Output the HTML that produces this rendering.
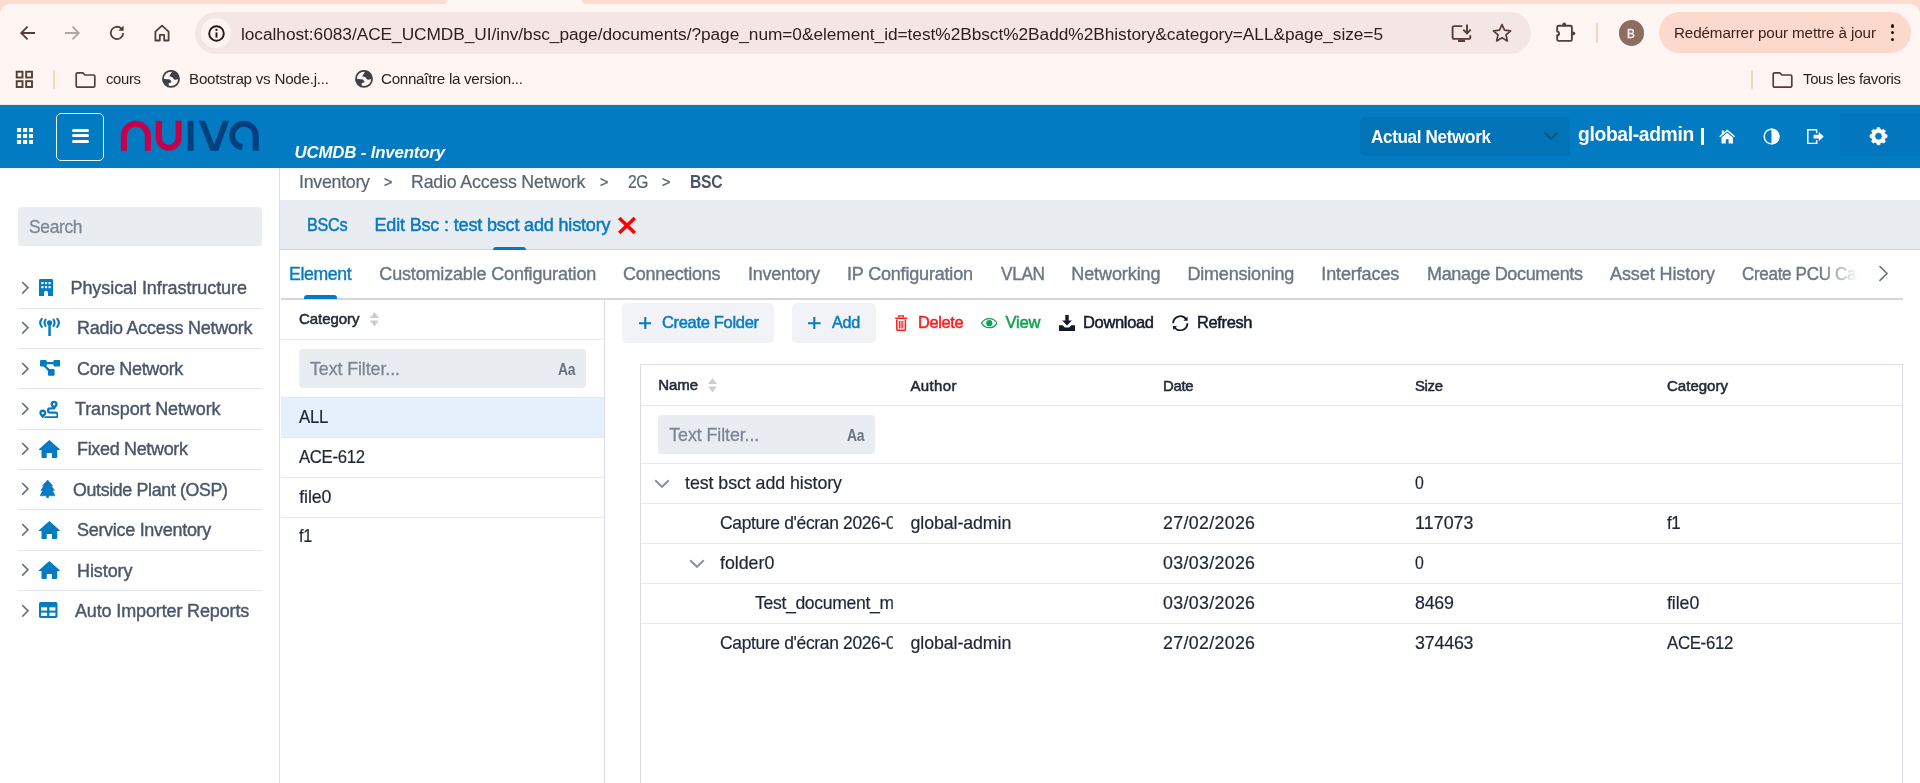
<!DOCTYPE html>
<html lang="en"><head><meta charset="utf-8"><title>UCMDB - Inventory</title>
<style>
html,body{margin:0;padding:0;}
body{width:1920px;height:783px;overflow:hidden;position:relative;background:#fff;font-family:"Liberation Sans", sans-serif;}
#r{position:absolute;left:0;top:0;width:1920px;height:783px;overflow:hidden;will-change:transform;}
#r div,#r span,#r svg{position:absolute;display:block;box-sizing:border-box;}
#r span{white-space:pre;}
</style></head><body><div id="r">
<div style="left:0px;top:0px;width:1920px;height:105px;background:#fff5f2;"></div>
<div style="left:0px;top:0px;width:446.5px;height:4px;background:#fddbd0;border-bottom-right-radius:5px;"></div>
<div style="left:581.5px;top:0px;width:1338.5px;height:4px;background:#fddbd0;border-bottom-left-radius:5px;"></div>
<div style="left:0px;top:3.8px;width:12px;height:12px;background:#fddbd0;"></div>
<div style="left:0px;top:3.8px;width:24px;height:24px;background:#fff5f2;border-top-left-radius:10px;"></div>
<div style="left:1908px;top:3.8px;width:12px;height:12px;background:#fddbd0;"></div>
<div style="left:1896px;top:3.8px;width:24px;height:24px;background:#fff5f2;border-top-right-radius:10px;"></div>
<div style="left:0px;top:104px;width:1920px;height:1px;background:#fbe4dc;"></div>
<svg style="left:18px;top:22.5px;" width="20" height="20" viewBox="0 0 20 20"><path d="M17 10H3.2M9.6 3.6 3.2 10l6.4 6.4" fill="none" stroke="#563d37" stroke-width="1.8"/></svg>
<svg style="left:62px;top:22.5px;" width="20" height="20" viewBox="0 0 20 20"><path d="M3 10h13.8M10.4 3.6 16.8 10l-6.4 6.4" fill="none" stroke="#b3a6a2" stroke-width="1.8"/></svg>
<svg style="left:107.3px;top:22.6px;" width="20" height="20" viewBox="0 0 20 20"><path d="M16.2 10a6.2 6.2 0 1 1-1.9-4.5" fill="none" stroke="#563d37" stroke-width="1.8"/><path d="M16.6 2.6v5.2h-5.2z" fill="#563d37"/></svg>
<svg style="left:152.3px;top:22.5px;" width="20" height="20" viewBox="0 0 20 20"><path d="M3.4 8.600 10 2.600 16.600 8.600v8.900h-4.400v-5.700H7.800v5.700H3.400z" fill="none" stroke="#563d37" stroke-width="1.8" stroke-linejoin="round"/></svg>
<div style="left:195px;top:12px;width:1336px;height:42px;background:#f3e6e5;border-radius:21px;"></div>
<div style="left:201.3px;top:18.3px;width:29.4px;height:29.4px;background:#fdf3f0;border-radius:50%;"></div>
<svg style="left:206.5px;top:23.5px;" width="19" height="19" viewBox="0 0 19 19"><circle cx="9.5" cy="9.5" r="7.300" fill="none" stroke="#231a19" stroke-width="1.900"/><rect x="8.550" y="8.400" width="1.900" height="5.200" fill="#231a19"/><circle cx="9.5" cy="5.900" r="1.150" fill="#231a19"/></svg>
<span style="left:241px;top:22px;line-height:24px;font-size:17.3px;font-weight:400;color:#2e201e;letter-spacing:-0.04px;">localhost:6083/ACE_UCMDB_UI/inv/bsc_page/documents/?page_num=0&amp;element_id=test%2Bbsct%2Badd%2Bhistory&amp;category=ALL&amp;page_size=5</span>
<svg style="left:1450px;top:22px;" width="24" height="22" viewBox="0 0 24 22"><path d="M12.300 4.100H4.200a1.600 1.600 0 0 0-1.600 1.600V15.300a1.600 1.600 0 0 0 1.600 1.600H18.700a1.600 1.600 0 0 0 1.600-1.600V13.200" fill="none" stroke="#563d37" stroke-width="1.900"/><rect x="8" y="17.500" width="7" height="2.500" fill="#563d37"/><path d="M17 2.400v8.600M13.300 7.600l3.700 3.700 3.700-3.700" fill="none" stroke="#563d37" stroke-width="1.900"/></svg>
<svg style="left:1491px;top:22px;" width="22" height="22" viewBox="0 0 22 22"><path d="M11 2.6l2.5 5.6 6.1.6-4.6 4.1 1.3 6L11 15.8 5.7 18.9l1.3-6L2.4 8.8l6.1-.6z" fill="none" stroke="#563d37" stroke-width="1.7" stroke-linejoin="round"/></svg>
<svg style="left:1554px;top:21px;" width="24" height="24" viewBox="0 0 24 24"><path d="M4.700 4.800H16.400a1.500 1.500 0 0 1 1.500 1.500V18.400a1.500 1.500 0 0 1-1.500 1.500H4.700a1.500 1.500 0 0 1-1.500-1.500V14.300a1.900 1.900 0 0 0 0-3.800V6.300a1.500 1.500 0 0 1 1.500-1.500z" fill="none" stroke="#563d37" stroke-width="1.900" stroke-linejoin="round"/><circle cx="10.200" cy="3.500" r="1.900" fill="#563d37"/><circle cx="19.300" cy="12.300" r="1.900" fill="#563d37"/></svg>
<div style="left:1596px;top:23px;width:2px;height:20px;background:#fbd0c4;border-radius:1px;"></div>
<div style="left:1618.5px;top:20px;width:25.5px;height:25.5px;background:#8c6d62;border-radius:50%;"></div>
<span style="left:1627.3px;top:22px;line-height:24px;font-size:12.8px;font-weight:400;color:#f6ebe7;transform:scaleX(0.9126);transform-origin:0 50%;-webkit-text-stroke:0.5px #f6ebe7;">B</span>
<div style="left:1659px;top:11.5px;width:252px;height:41.5px;background:#fdd8cd;border-radius:21px;"></div>
<span style="left:1674px;top:21px;line-height:24px;font-size:15.2px;font-weight:400;color:#3a1f1a;letter-spacing:-0.112px;">Redémarrer pour mettre à jour</span>
<div style="left:1890.6px;top:23.95px;width:3.7px;height:3.7px;background:#32100c;border-radius:50%;"></div>
<div style="left:1890.6px;top:30.75px;width:3.7px;height:3.7px;background:#32100c;border-radius:50%;"></div>
<div style="left:1890.6px;top:37.55px;width:3.7px;height:3.7px;background:#32100c;border-radius:50%;"></div>
<svg style="left:15.3px;top:70px;" width="19" height="19" viewBox="0 0 19 19"><rect x="1.7" y="1.7" width="5.800" height="5.800" fill="none" stroke="#563d37" stroke-width="1.900"/><rect x="1.7" y="11.2" width="5.800" height="5.800" fill="none" stroke="#563d37" stroke-width="1.900"/><rect x="11.2" y="1.7" width="5.800" height="5.800" fill="none" stroke="#563d37" stroke-width="1.900"/><rect x="11.2" y="11.2" width="5.800" height="5.800" fill="none" stroke="#563d37" stroke-width="1.900"/></svg>
<div style="left:52.5px;top:69.5px;width:2px;height:19px;background:#fbd0c4;border-radius:1px;"></div>
<svg style="left:75px;top:70.5px;" width="21" height="18" viewBox="0 0 21 18"><path d="M1.2 3.2a1.4 1.4 0 0 1 1.4-1.4h5.2l2 2.2h8.6a1.4 1.4 0 0 1 1.4 1.4v9.4a1.4 1.4 0 0 1-1.4 1.4H2.6a1.4 1.4 0 0 1-1.4-1.4z" fill="none" stroke="#563d37" stroke-width="1.7" stroke-linejoin="round"/></svg>
<span style="left:105.5px;top:67px;line-height:24px;font-size:15.2px;font-weight:400;color:#2d2322;letter-spacing:-0.35px;transform:scaleX(0.9793);transform-origin:0 50%;">cours</span>
<svg style="left:162px;top:70px;" width="18" height="18" viewBox="0 0 18 18"><defs><clipPath id="gc1"><circle cx="9" cy="8.900" r="8.300"/></clipPath></defs><g clip-path="url(#gc1)" fill="#3e4144"><path d="M11.400 0C9.600 2.600 8 4.600 7.200 6.200 8.600 6.500 10 6.900 10.800 7.600 11.300 8.700 11.900 9.600 13.100 9.700 15 9.800 16.600 9 18.500 7.400V-1z"/><path d="M-1 9.100C3 8.900 6 9.200 7.900 9.600 8.700 10.400 9.400 11.400 9.500 12.300 8.600 12.800 7.500 13 6.800 13.200 6.600 14.300 6.600 15.600 6.900 18.500H-1z"/></g><circle cx="9" cy="8.900" r="8.050" fill="none" stroke="#3e4144" stroke-width="1.800"/></svg>
<span style="left:189px;top:67px;line-height:24px;font-size:15.2px;font-weight:400;color:#2d2322;letter-spacing:-0.248px;">Bootstrap vs Node.j...</span>
<svg style="left:355px;top:70px;" width="18" height="18" viewBox="0 0 18 18"><defs><clipPath id="gc2"><circle cx="9" cy="8.900" r="8.300"/></clipPath></defs><g clip-path="url(#gc2)" fill="#3e4144"><path d="M11.400 0C9.600 2.600 8 4.600 7.200 6.200 8.600 6.500 10 6.900 10.800 7.600 11.300 8.700 11.900 9.600 13.100 9.700 15 9.800 16.600 9 18.500 7.400V-1z"/><path d="M-1 9.100C3 8.900 6 9.200 7.900 9.600 8.700 10.400 9.400 11.400 9.500 12.300 8.600 12.800 7.500 13 6.800 13.200 6.600 14.300 6.600 15.600 6.900 18.500H-1z"/></g><circle cx="9" cy="8.900" r="8.050" fill="none" stroke="#3e4144" stroke-width="1.800"/></svg>
<span style="left:381px;top:67px;line-height:24px;font-size:15.2px;font-weight:400;color:#2d2322;letter-spacing:-0.299px;">Connaître la version...</span>
<div style="left:1750.5px;top:69.5px;width:2px;height:19px;background:#fbd0c4;border-radius:1px;"></div>
<svg style="left:1772px;top:70.5px;" width="21" height="18" viewBox="0 0 21 18"><path d="M1.2 3.2a1.4 1.4 0 0 1 1.4-1.4h5.2l2 2.2h8.6a1.4 1.4 0 0 1 1.4 1.4v9.4a1.4 1.4 0 0 1-1.4 1.4H2.6a1.4 1.4 0 0 1-1.4-1.4z" fill="none" stroke="#563d37" stroke-width="1.7" stroke-linejoin="round"/></svg>
<span style="left:1803px;top:67px;line-height:24px;font-size:15.2px;font-weight:400;color:#2d2322;letter-spacing:-0.35px;transform:scaleX(0.9857);transform-origin:0 50%;">Tous les favoris</span>
<div style="left:0px;top:105px;width:1920px;height:62.7px;background:#027bc3;"></div>
<svg style="left:16.9px;top:128.1px;" width="16.2" height="16.2" viewBox="0 0 16.200 16.200"><rect x="0" y="0" width="4.100" height="4.100" fill="#fff"/><rect x="0" y="6" width="4.100" height="4.100" fill="#fff"/><rect x="0" y="12" width="4.100" height="4.100" fill="#fff"/><rect x="6.05" y="0" width="4.100" height="4.100" fill="#fff"/><rect x="6.05" y="6" width="4.100" height="4.100" fill="#fff"/><rect x="6.05" y="12" width="4.100" height="4.100" fill="#fff"/><rect x="12.1" y="0" width="4.100" height="4.100" fill="#fff"/><rect x="12.1" y="6" width="4.100" height="4.100" fill="#fff"/><rect x="12.1" y="12" width="4.100" height="4.100" fill="#fff"/></svg>
<div style="left:56px;top:112.9px;width:48.1px;height:48.1px;background:transparent;border:1.2px solid #eef5fa;border-radius:5px;"></div>
<div style="left:71.7px;top:129.0px;width:17.8px;height:3px;background:#fff;border-radius:1.5px;"></div>
<div style="left:71.7px;top:134.4px;width:17.8px;height:3px;background:#fff;border-radius:1.5px;"></div>
<div style="left:71.7px;top:140.0px;width:17.8px;height:3px;background:#fff;border-radius:1.5px;"></div>
<svg style="left:116px;top:116px;" width="148" height="40" viewBox="116 116 148 40"><g fill="none" stroke-width="6.1"><path d="M123.9 150.8V135.8a12 12 0 0 1 24 0V150.8" stroke="#c5004b"/><path d="M158.8 120.8V137.8a9.9 9.9 0 0 0 19.8 0V120.8" stroke="#c5004b"/><path d="M190.6 120.8V150.8" stroke="#00407f" stroke-width="5.9"/><path d="M198.750 120.800H205.050L214.270 144.600 222.900 120.800H229.200L218.300 150.800H210.400z" fill="#00407f" stroke="none"/><path d="M255.7 150.8V135.6a11.75 11.75 0 1 0-13.2 11.66" stroke="#00407f" stroke-width="6"/></g></svg>
<span style="left:294.5px;top:141px;line-height:24px;font-size:16.8px;font-weight:700;color:#fff;font-style:italic;letter-spacing:-0.15px;">UCMDB - Inventory</span>
<div style="left:1360px;top:117px;width:210px;height:38.5px;background:#0273b7;border-radius:5px;"></div>
<span style="left:1371px;top:125px;line-height:24px;font-size:17.6px;font-weight:700;color:#fff;letter-spacing:-0.35px;transform:scaleX(0.9714);transform-origin:0 50%;">Actual Network</span>
<svg style="left:1543px;top:131px;" width="16" height="10" viewBox="0 0 16 10"><path d="M1.6 1.6 8 8l6.400-6.400" fill="none" stroke="#0a4f82" stroke-width="1.9"/></svg>
<span style="left:1578px;top:122px;line-height:24px;font-size:19.6px;font-weight:700;color:#fff;letter-spacing:-0.35px;transform:scaleX(0.9841);transform-origin:0 50%;">global-admin</span>
<div style="left:1701.2px;top:127.6px;width:2.4px;height:17.2px;background:#fff;"></div>
<svg style="left:1718.9px;top:128.6px;" width="16.4" height="15" viewBox="0 0 16.4 15"><g transform="translate(16.4 0) scale(-1 1)"><path d="M8.200.500.200 7.200l.9 1L8.200 2.400l7.100 5.800.9-1-2.600-2.200V1.400h-1.900v2z" fill="#fff"/><path d="M8.200 3.700 2.500 8.400v6.200h4.300v-4.300h2.800v4.300h4.300V8.400z" fill="#fff"/></g></svg>
<svg style="left:1762.6px;top:127.5px;" width="17" height="17" viewBox="0 0 17 17"><circle cx="8.5" cy="8.500" r="7.300" fill="none" stroke="#fff" stroke-width="1.500"/><path d="M8.500.500a8 8 0 0 1 0 16z" fill="#fff"/></svg>
<svg style="left:1806.5px;top:128.6px;" width="17.4" height="15.2" viewBox="0 0 17.400 15.200"><path d="M9.700.700H.800v13.800h8.900v-3.400" fill="none" stroke="#fff" stroke-width="1.500"/><path d="M9.700.700v3.400" fill="none" stroke="#fff" stroke-width="1.500"/><path d="M6.600 5.700h5.200V2.900l4.900 4.700-4.900 4.700V9.500H6.600z" fill="#fff"/></svg>
<div style="left:1839.5px;top:113px;width:80.5px;height:42.5px;background:#0277bd;"></div>
<svg style="left:1868px;top:125.5px;" width="21" height="21" viewBox="0 0 21 21"><path d="M18.99 8.85L18.99 11.55L17.32 11.78L16.44 13.90L17.46 15.25L15.55 17.16L14.20 16.14L12.08 17.02L11.85 18.69L9.15 18.69L8.92 17.02L6.80 16.14L5.45 17.16L3.54 15.25L4.56 13.90L3.68 11.78L2.01 11.55L2.01 8.85L3.68 8.62L4.56 6.50L3.54 5.15L5.45 3.24L6.80 4.26L8.92 3.38L9.15 1.71L11.85 1.71L12.08 3.38L14.20 4.26L15.55 3.24L17.46 5.15L16.44 6.50L17.32 8.62ZM14.30 10.20a3.8 3.8 0 1 0 -7.6 0a3.8 3.8 0 1 0 7.6 0Z" fill="#fff" fill-rule="evenodd" stroke="#fff" stroke-width="0.800" stroke-linejoin="round"/></svg>
<div style="left:279px;top:167.7px;width:1px;height:616px;background:#dadfe7;"></div>
<div style="left:18px;top:207px;width:244px;height:39px;background:#e9ecf1;border-radius:4px;"></div>
<span style="left:29px;top:215px;line-height:24px;font-size:17.8px;font-weight:400;color:#7d8794;letter-spacing:-0.35px;transform:scaleX(0.98);transform-origin:0 50%;-webkit-text-stroke:0.3px #7d8794;">Search</span>
<svg style="left:21.4px;top:280.5px;" width="9" height="13.6" viewBox="0 0 9 13.600"><path d="M1.200 1 7 6.800 1.200 12.600" fill="none" stroke="#6b7280" stroke-width="1.700"/></svg>
<svg style="left:39.2px;top:278.5px;" width="14" height="17.2" viewBox="0 0 14 17.200"><path d="M1.300 0h11.400A1.300 1.300 0 0 1 14 1.300V17.200H9v-3.400a2 2 0 0 0-4 0v3.400H0V1.300A1.300 1.300 0 0 1 1.300 0z" fill="#027bc3"/><rect x="2.3" y="3" width="2.200" height="2.200" rx=".4" fill="#fff"/><rect x="2.3" y="7" width="2.200" height="2.200" rx=".4" fill="#fff"/><rect x="5.9" y="3" width="2.200" height="2.200" rx=".4" fill="#fff"/><rect x="5.9" y="7" width="2.200" height="2.200" rx=".4" fill="#fff"/><rect x="9.5" y="3" width="2.200" height="2.200" rx=".4" fill="#fff"/><rect x="9.5" y="7" width="2.200" height="2.200" rx=".4" fill="#fff"/></svg>
<span style="left:70.5px;top:276px;line-height:24px;font-size:18px;font-weight:400;color:#4b566a;letter-spacing:-0.072px;-webkit-text-stroke:0.4px #4b566a;">Physical Infrastructure</span>
<div style="left:18px;top:308px;width:244px;height:1px;background:#e2e5ea;"></div>
<svg style="left:21.4px;top:320.5px;" width="9" height="13.6" viewBox="0 0 9 13.600"><path d="M1.200 1 7 6.800 1.200 12.600" fill="none" stroke="#6b7280" stroke-width="1.700"/></svg>
<svg style="left:39px;top:317.90000000000003px;" width="21.1" height="18.2" viewBox="0 0 21.100 18.200"><g fill="none" stroke="#027bc3" stroke-width="2.100" stroke-linecap="round"><path d="M10.550 5v12.200" stroke-width="2.500" stroke-linecap="butt"/><path d="M6.500 1.700Q4.500 4.800 6.500 7.900M14.600 1.700Q16.600 4.800 14.600 7.900M2.800 .9Q-.4 4.800 2.800 8.900M18.300 .9Q21.500 4.800 18.300 8.900"/></g><circle cx="10.550" cy="4.800" r="2.600" fill="#027bc3"/><rect x="9.300" y="16.600" width="2.500" height="1.600" rx=".8" fill="#027bc3"/></svg>
<span style="left:77px;top:316px;line-height:24px;font-size:18px;font-weight:400;color:#4b566a;letter-spacing:-0.241px;-webkit-text-stroke:0.4px #4b566a;">Radio Access Network</span>
<div style="left:18px;top:348px;width:244px;height:1px;background:#e2e5ea;"></div>
<svg style="left:21.4px;top:361.59999999999997px;" width="9" height="13.6" viewBox="0 0 9 13.600"><path d="M1.200 1 7 6.800 1.200 12.600" fill="none" stroke="#6b7280" stroke-width="1.700"/></svg>
<svg style="left:39.6px;top:360.29999999999995px;" width="20.4" height="15.7" viewBox="0 0 20.400 15.700"><rect x="0" y="0" width="6.700" height="6.500" rx="1.200" fill="#027bc3"/><rect x="13.500" y="0" width="6.900" height="6.500" rx="1.200" fill="#027bc3"/><rect x="7.900" y="9.100" width="6.700" height="6.600" rx="1.200" fill="#027bc3"/><path d="M6 3.200h8.500M4.300 5.600 9.700 10.900" stroke="#027bc3" stroke-width="2.200" fill="none"/></svg>
<span style="left:77px;top:357px;line-height:24px;font-size:18px;font-weight:400;color:#4b566a;letter-spacing:-0.339px;-webkit-text-stroke:0.4px #4b566a;">Core Network</span>
<div style="left:18px;top:388px;width:244px;height:1px;background:#e2e5ea;"></div>
<svg style="left:21.4px;top:401.7px;" width="9" height="13.6" viewBox="0 0 9 13.600"><path d="M1.200 1 7 6.800 1.200 12.600" fill="none" stroke="#6b7280" stroke-width="1.700"/></svg>
<svg style="left:39px;top:399.6px;" width="19.2" height="18.6" viewBox="0 0 19.200 18.600"><path d="M3.800 18.500C2.600 16.900.300 15 .300 13.100a3.500 3.500 0 0 1 7 0c0 1.900-2.300 3.800-3.500 5.400zM3.800 11.900a1.200 1.200 0 1 0 0 2.400 1.200 1.200 0 0 0 0-2.400z" fill="#027bc3" fill-rule="evenodd"/><path d="M15.300 9.500C14 8 11.500 6.100 11.500 4.200a3.550 3.550 0 0 1 7.100 0c0 1.900-2.100 3.800-3.300 5.300zM15.050 3a1.200 1.200 0 1 0 0 2.400 1.200 1.200 0 0 0 0-2.400z" fill="#027bc3" fill-rule="evenodd"/><path d="M15.200 8.400H11.200a2.150 2.150 0 0 0 0 4.300H16.400a2.350 2.350 0 0 1 0 4.700H6.400" fill="none" stroke="#027bc3" stroke-width="2.200" stroke-linecap="round"/></svg>
<span style="left:75px;top:397px;line-height:24px;font-size:18px;font-weight:400;color:#4b566a;letter-spacing:-0.117px;-webkit-text-stroke:0.4px #4b566a;">Transport Network</span>
<div style="left:18px;top:429px;width:244px;height:1px;background:#e2e5ea;"></div>
<svg style="left:21.4px;top:441.8px;" width="9" height="13.6" viewBox="0 0 9 13.600"><path d="M1.200 1 7 6.800 1.200 12.600" fill="none" stroke="#6b7280" stroke-width="1.700"/></svg>
<svg style="left:39.4px;top:439.8px;" width="20.7" height="17.9" viewBox="0 0 20.700 17.900"><path d="M10.350 0 20.500 9.100a.55 .55 0 0 1-.4 1H18.200v7a.8 .8 0 0 1-.8 .8H12.900V13.100H7.700v4.800H3.300a.8 .8 0 0 1-.8-.8v-7H.6a.55 .55 0 0 1-.4-1z" fill="#027bc3"/></svg>
<span style="left:77px;top:437px;line-height:24px;font-size:18px;font-weight:400;color:#4b566a;letter-spacing:-0.336px;-webkit-text-stroke:0.4px #4b566a;">Fixed Network</span>
<div style="left:18px;top:469px;width:244px;height:1px;background:#e2e5ea;"></div>
<svg style="left:21.4px;top:482.2px;" width="9" height="13.6" viewBox="0 0 9 13.600"><path d="M1.200 1 7 6.800 1.200 12.600" fill="none" stroke="#6b7280" stroke-width="1.700"/></svg>
<svg style="left:39.9px;top:480.2px;" width="15.2" height="17.8" viewBox="0 0 15.200 17.800"><path d="M7.600 0 12.800 5.800H11.300L14.500 10.400H12.500L15.200 15.800H8.700v2H6.500v-2H0L2.700 10.400H.7L3.900 5.800H2.400z" fill="#027bc3" stroke="#027bc3" stroke-width=".5" stroke-linejoin="round"/></svg>
<span style="left:72.5px;top:478px;line-height:24px;font-size:18px;font-weight:400;color:#4b566a;letter-spacing:-0.35px;transform:scaleX(0.9887);transform-origin:0 50%;-webkit-text-stroke:0.4px #4b566a;">Outside Plant (OSP)</span>
<div style="left:18px;top:509px;width:244px;height:1px;background:#e2e5ea;"></div>
<svg style="left:21.4px;top:522.7px;" width="9" height="13.6" viewBox="0 0 9 13.600"><path d="M1.200 1 7 6.800 1.200 12.600" fill="none" stroke="#6b7280" stroke-width="1.700"/></svg>
<svg style="left:39.4px;top:520.7px;" width="20.7" height="17.9" viewBox="0 0 20.700 17.900"><path d="M10.350 0 20.500 9.100a.55 .55 0 0 1-.4 1H18.200v7a.8 .8 0 0 1-.8 .8H12.900V13.100H7.700v4.800H3.300a.8 .8 0 0 1-.8-.8v-7H.6a.55 .55 0 0 1-.4-1z" fill="#027bc3"/></svg>
<span style="left:77px;top:518px;line-height:24px;font-size:18px;font-weight:400;color:#4b566a;letter-spacing:-0.298px;-webkit-text-stroke:0.4px #4b566a;">Service Inventory</span>
<div style="left:18px;top:550px;width:244px;height:1px;background:#e2e5ea;"></div>
<svg style="left:21.4px;top:563.4000000000001px;" width="9" height="13.6" viewBox="0 0 9 13.600"><path d="M1.200 1 7 6.800 1.200 12.600" fill="none" stroke="#6b7280" stroke-width="1.700"/></svg>
<svg style="left:39.4px;top:561.4000000000001px;" width="20.7" height="17.9" viewBox="0 0 20.700 17.900"><path d="M10.350 0 20.500 9.100a.55 .55 0 0 1-.4 1H18.200v7a.8 .8 0 0 1-.8 .8H12.900V13.100H7.700v4.800H3.300a.8 .8 0 0 1-.8-.8v-7H.6a.55 .55 0 0 1-.4-1z" fill="#027bc3"/></svg>
<span style="left:77px;top:559px;line-height:24px;font-size:18px;font-weight:400;color:#4b566a;letter-spacing:-0.086px;-webkit-text-stroke:0.4px #4b566a;">History</span>
<div style="left:18px;top:590px;width:244px;height:1px;background:#e2e5ea;"></div>
<svg style="left:21.4px;top:603.7px;" width="9" height="13.6" viewBox="0 0 9 13.600"><path d="M1.200 1 7 6.800 1.200 12.600" fill="none" stroke="#6b7280" stroke-width="1.700"/></svg>
<svg style="left:39.2px;top:602.2px;" width="18.5" height="16" viewBox="0 0 18.500 16"><rect x="0" y="0" width="18.500" height="16" rx="1.800" fill="#027bc3"/><rect x="2.1" y="5.3" width="6" height="3.300" fill="#fff"/><rect x="2.1" y="10.6" width="6" height="3.300" fill="#fff"/><rect x="10.4" y="5.3" width="6" height="3.300" fill="#fff"/><rect x="10.4" y="10.6" width="6" height="3.300" fill="#fff"/></svg>
<span style="left:75px;top:599px;line-height:24px;font-size:18px;font-weight:400;color:#4b566a;letter-spacing:-0.139px;-webkit-text-stroke:0.4px #4b566a;">Auto Importer Reports</span>
<span style="left:299px;top:170px;line-height:24px;font-size:17.8px;font-weight:400;color:#5a6470;letter-spacing:-0.268px;-webkit-text-stroke:0.2px #5a6470;">Inventory</span>
<span style="left:383.5px;top:170px;line-height:24px;font-size:15.5px;font-weight:400;color:#5a6470;transform:scaleX(0.9379);transform-origin:0 50%;-webkit-text-stroke:0.4px #5a6470;">&gt;</span>
<span style="left:411px;top:170px;line-height:24px;font-size:17.8px;font-weight:400;color:#5a6470;letter-spacing:-0.178px;-webkit-text-stroke:0.2px #5a6470;">Radio Access Network</span>
<span style="left:599.5px;top:170px;line-height:24px;font-size:15.5px;font-weight:400;color:#5a6470;transform:scaleX(0.9379);transform-origin:0 50%;-webkit-text-stroke:0.4px #5a6470;">&gt;</span>
<span style="left:627.5px;top:170px;line-height:24px;font-size:17.8px;font-weight:400;color:#5a6470;letter-spacing:-0.35px;transform:scaleX(0.8767);transform-origin:0 50%;-webkit-text-stroke:0.2px #5a6470;">2G</span>
<span style="left:661.5px;top:170px;line-height:24px;font-size:15.5px;font-weight:400;color:#5a6470;transform:scaleX(0.9379);transform-origin:0 50%;-webkit-text-stroke:0.4px #5a6470;">&gt;</span>
<span style="left:689.5px;top:170px;line-height:24px;font-size:17.6px;font-weight:700;color:#4a5568;letter-spacing:-0.35px;transform:scaleX(0.8915);transform-origin:0 50%;">BSC</span>
<div style="left:280px;top:200px;width:1640px;height:49.5px;background:#e9ecf1;"></div>
<div style="left:280px;top:249px;width:1640px;height:1px;background:#cdd3dc;"></div>
<span style="left:307px;top:213px;line-height:24px;font-size:18px;font-weight:400;color:#0a7ac0;letter-spacing:-0.35px;transform:scaleX(0.9007);transform-origin:0 50%;-webkit-text-stroke:0.5px #0a7ac0;">BSCs</span>
<span style="left:374.5px;top:213px;line-height:24px;font-size:18px;font-weight:400;color:#0a7ac0;letter-spacing:-0.165px;-webkit-text-stroke:0.5px #0a7ac0;">Edit Bsc : test bsct add history</span>
<svg style="left:617px;top:215.5px;" width="20" height="19" viewBox="0 0 20 19"><path d="M2.200 2 17.800 17M17.800 2 2.200 17" stroke="#f00" stroke-width="3.500" fill="none"/></svg>
<div style="left:492.5px;top:246.6px;width:33px;height:3.4px;background:#027bc3;border-radius:3px 3px 0 0;"></div>
<span style="left:289.3px;top:262px;line-height:24px;font-size:18px;font-weight:400;color:#0a7ac0;letter-spacing:-0.35px;transform:scaleX(0.9805);transform-origin:0 50%;-webkit-text-stroke:0.4px #0a7ac0;">Element</span>
<span style="left:379.3px;top:262px;line-height:24px;font-size:18px;font-weight:400;color:#6b7785;letter-spacing:-0.165px;-webkit-text-stroke:0.4px #6b7785;">Customizable Configuration</span>
<span style="left:623px;top:262px;line-height:24px;font-size:18px;font-weight:400;color:#6b7785;letter-spacing:-0.258px;-webkit-text-stroke:0.4px #6b7785;">Connections</span>
<span style="left:748px;top:262px;line-height:24px;font-size:18px;font-weight:400;color:#6b7785;letter-spacing:-0.256px;-webkit-text-stroke:0.4px #6b7785;">Inventory</span>
<span style="left:847px;top:262px;line-height:24px;font-size:18px;font-weight:400;color:#6b7785;letter-spacing:-0.184px;-webkit-text-stroke:0.4px #6b7785;">IP Configuration</span>
<span style="left:1000.5px;top:262px;line-height:24px;font-size:18px;font-weight:400;color:#6b7785;letter-spacing:-0.35px;transform:scaleX(0.9569);transform-origin:0 50%;-webkit-text-stroke:0.4px #6b7785;">VLAN</span>
<span style="left:1071.3px;top:262px;line-height:24px;font-size:18px;font-weight:400;color:#6b7785;letter-spacing:-0.094px;-webkit-text-stroke:0.4px #6b7785;">Networking</span>
<span style="left:1187.5px;top:262px;line-height:24px;font-size:18px;font-weight:400;color:#6b7785;letter-spacing:-0.206px;-webkit-text-stroke:0.4px #6b7785;">Dimensioning</span>
<span style="left:1321.3px;top:262px;line-height:24px;font-size:18px;font-weight:400;color:#6b7785;letter-spacing:-0.116px;-webkit-text-stroke:0.4px #6b7785;">Interfaces</span>
<span style="left:1427px;top:262px;line-height:24px;font-size:18px;font-weight:400;color:#6b7785;letter-spacing:-0.34px;-webkit-text-stroke:0.4px #6b7785;">Manage Documents</span>
<span style="left:1610px;top:262px;line-height:24px;font-size:18px;font-weight:400;color:#6b7785;letter-spacing:-0.086px;-webkit-text-stroke:0.4px #6b7785;">Asset History</span>
<span style="left:1741.8px;top:262px;line-height:24px;font-size:18px;font-weight:400;color:#6b7785;letter-spacing:-0.35px;transform:scaleX(0.9475);transform-origin:0 50%;-webkit-text-stroke:0.4px #6b7785;">Create PCU Card</span>
<div style="left:1822px;top:255px;width:50px;height:38px;background:linear-gradient(90deg,rgba(255,255,255,0),#fff 72%);"></div>
<div style="left:1858px;top:255px;width:62px;height:38px;background:#fff;"></div>
<svg style="left:1878px;top:264.5px;" width="11" height="17" viewBox="0 0 11 17"><path d="M1.500 1.200 9 8.500 1.500 15.800" fill="none" stroke="#6b7785" stroke-width="1.700"/></svg>
<div style="left:280.5px;top:297.6px;width:1622px;height:2.2px;background:#d3d7dd;"></div>
<div style="left:304.3px;top:295px;width:33.2px;height:3.5px;background:#027bc3;border-radius:3px 3px 0 0;"></div>
<div style="left:604px;top:299.8px;width:1px;height:484px;background:#dadfe7;"></div>
<span style="left:299px;top:307px;line-height:24px;font-size:15px;font-weight:400;color:#1f2937;letter-spacing:-0.054px;-webkit-text-stroke:0.55px #1f2937;">Category</span>
<svg style="left:369.8px;top:312px;" width="9" height="14.5" viewBox="0 0 9 14.500"><path d="M4.500 0 9 6H0z" fill="#c9ced6"/><path d="M0 8.500h9L4.500 14.500z" fill="#c9ced6"/></svg>
<div style="left:281px;top:339px;width:323px;height:1px;background:#e6e9ef;"></div>
<div style="left:299px;top:349px;width:287px;height:38.5px;background:#e9ecf1;border-radius:4px;"></div>
<span style="left:310px;top:357px;line-height:24px;font-size:17.8px;font-weight:400;color:#7d8794;letter-spacing:-0.07px;-webkit-text-stroke:0.3px #7d8794;">Text Filter...</span>
<span style="left:558px;top:358px;line-height:24px;font-size:17px;font-weight:700;color:#6b7280;letter-spacing:-0.35px;transform:scaleX(0.8184);transform-origin:0 50%;">Aa</span>
<div style="left:281px;top:397.3px;width:323px;height:40px;background:#e6f0fd;"></div>
<div style="left:281px;top:397px;width:323px;height:1px;background:#e6e9ef;"></div>
<div style="left:281px;top:437.3px;width:323px;height:1px;background:#e6e9ef;"></div>
<div style="left:281px;top:477.3px;width:323px;height:1px;background:#e6e9ef;"></div>
<div style="left:281px;top:517px;width:323px;height:1px;background:#e6e9ef;"></div>
<span style="left:299px;top:405px;line-height:24px;font-size:17.8px;font-weight:400;color:#1e2637;letter-spacing:-0.35px;transform:scaleX(0.947);transform-origin:0 50%;-webkit-text-stroke:0.2px #1e2637;">ALL</span>
<span style="left:299px;top:445px;line-height:24px;font-size:17.8px;font-weight:400;color:#1e2637;letter-spacing:-0.35px;transform:scaleX(0.9421);transform-origin:0 50%;-webkit-text-stroke:0.2px #1e2637;">ACE-612</span>
<span style="left:299.3px;top:485px;line-height:24px;font-size:17.8px;font-weight:400;color:#1e2637;letter-spacing:-0.156px;-webkit-text-stroke:0.2px #1e2637;">file0</span>
<span style="left:299.3px;top:524px;line-height:24px;font-size:17.8px;font-weight:400;color:#1e2637;letter-spacing:-0.35px;transform:scaleX(0.9107);transform-origin:0 50%;-webkit-text-stroke:0.2px #1e2637;">f1</span>
<div style="left:622px;top:303px;width:151.5px;height:39.5px;background:#f1f3f6;border-radius:5px;"></div>
<div style="left:791.8px;top:303px;width:83.8px;height:39.5px;background:#f1f3f6;border-radius:5px;"></div>
<svg style="left:638.7px;top:316.5px;" width="12.6" height="12.6" viewBox="0 0 12.600 12.600"><path d="M6.300 0v12.600M0 6.300h12.600" stroke="#0a7ac0" stroke-width="2.100" fill="none"/></svg>
<span style="left:661.8px;top:311px;line-height:24px;font-size:16.6px;font-weight:400;color:#0a7ac0;letter-spacing:-0.35px;transform:scaleX(0.9974);transform-origin:0 50%;-webkit-text-stroke:0.5px #0a7ac0;">Create Folder</span>
<svg style="left:808.2px;top:316.5px;" width="12.6" height="12.6" viewBox="0 0 12.600 12.600"><path d="M6.300 0v12.600M0 6.300h12.600" stroke="#0a7ac0" stroke-width="2.100" fill="none"/></svg>
<span style="left:831.8px;top:311px;line-height:24px;font-size:16.6px;font-weight:400;color:#0a7ac0;letter-spacing:-0.35px;transform:scaleX(0.9781);transform-origin:0 50%;-webkit-text-stroke:0.5px #0a7ac0;">Add</span>
<svg style="left:894.8px;top:314.6px;" width="12.2" height="16" viewBox="0 0 12.200 16"><path d="M.2 3.300h11.800" stroke="#fb1c1c" stroke-width="1.500"/><path d="M3.900 2.600V.9h4.400v1.700" fill="none" stroke="#fb1c1c" stroke-width="1.400"/><path d="M1.800 4.600v9.600a1.100 1.100 0 0 0 1.100 1.100h6.400a1.100 1.100 0 0 0 1.100-1.100V4.600" fill="none" stroke="#fb1c1c" stroke-width="1.500"/><path d="M4.400 6v7.400M6.100 6v7.400M7.800 6v7.400" stroke="#fb1c1c" stroke-width="1.100"/></svg>
<span style="left:917.5px;top:311px;line-height:24px;font-size:16.6px;font-weight:400;color:#fb1c1c;letter-spacing:-0.35px;transform:scaleX(0.9844);transform-origin:0 50%;-webkit-text-stroke:0.5px #fb1c1c;">Delete</span>
<svg style="left:980.7px;top:318.3px;" width="16.6" height="10.4" viewBox="0 0 16.600 10.400"><path d="M.5 5.200C2.500 2 5.200.700 8.300.700s5.800 1.300 7.800 4.500c-2 3.200-4.700 4.500-7.800 4.500S2.500 8.400.500 5.200z" fill="none" stroke="#12a150" stroke-width="1.300"/><circle cx="8.300" cy="5.200" r="3.100" fill="#12a150"/></svg>
<span style="left:1005.5px;top:311px;line-height:24px;font-size:16.6px;font-weight:400;color:#12a150;letter-spacing:-0.224px;-webkit-text-stroke:0.5px #12a150;">View</span>
<svg style="left:1059.2px;top:314.7px;" width="16" height="16" viewBox="0 0 16 16"><path d="M6.300 0h3.400v5.600h3.200L8 10.600 3.100 5.600h3.200z" fill="#121b2e"/><path d="M0 10.200h3.600L6 12.600h4l2.400-2.400H16V16H0z" fill="#121b2e"/></svg>
<span style="left:1083.3px;top:311px;line-height:24px;font-size:16.6px;font-weight:400;color:#121b2e;letter-spacing:-0.35px;transform:scaleX(0.9951);transform-origin:0 50%;-webkit-text-stroke:0.5px #121b2e;">Download</span>
<svg style="left:1172.3px;top:314.5px;" width="16.6" height="16.6" viewBox="0 0 16.600 16.600"><path d="M1.200 8.300a7.100 7.100 0 0 1 12.800-4.200M15.400 8.300a7.100 7.100 0 0 1-12.800 4.200" fill="none" stroke="#121b2e" stroke-width="1.800"/><path d="M15.600 1.600v4.100h-4.100z" fill="#121b2e"/><path d="M1 15v-4.100h4.100z" fill="#121b2e"/></svg>
<span style="left:1197px;top:311px;line-height:24px;font-size:16.6px;font-weight:400;color:#121b2e;letter-spacing:-0.35px;transform:scaleX(0.9909);transform-origin:0 50%;-webkit-text-stroke:0.5px #121b2e;">Refresh</span>
<div style="left:640px;top:364px;width:1262.5px;height:420px;background:#fff;border:1px solid #dadfe7;border-bottom:none;"></div>
<span style="left:658.3px;top:373px;line-height:24px;font-size:15px;font-weight:400;color:#1f2937;letter-spacing:-0.105px;-webkit-text-stroke:0.55px #1f2937;">Name</span>
<span style="left:910.5px;top:374px;line-height:24px;font-size:15px;font-weight:400;color:#1f2937;letter-spacing:0.359px;-webkit-text-stroke:0.55px #1f2937;">Author</span>
<span style="left:1163px;top:374px;line-height:24px;font-size:15px;font-weight:400;color:#1f2937;letter-spacing:-0.35px;transform:scaleX(0.9955);transform-origin:0 50%;-webkit-text-stroke:0.55px #1f2937;">Date</span>
<span style="left:1414.5px;top:374px;line-height:24px;font-size:15px;font-weight:400;color:#1f2937;letter-spacing:-0.35px;transform:scaleX(0.9951);transform-origin:0 50%;-webkit-text-stroke:0.55px #1f2937;">Size</span>
<span style="left:1667px;top:374px;line-height:24px;font-size:15px;font-weight:400;color:#1f2937;letter-spacing:0.018px;-webkit-text-stroke:0.55px #1f2937;">Category</span>
<svg style="left:707.8px;top:377.5px;" width="9" height="14.5" viewBox="0 0 9 14.500"><path d="M4.500 0 9 6H0z" fill="#c9ced6"/><path d="M0 8.500h9L4.500 14.500z" fill="#c9ced6"/></svg>
<div style="left:641px;top:405px;width:1260.5px;height:1px;background:#e6e9ef;"></div>
<div style="left:658px;top:415.3px;width:216.5px;height:38.3px;background:#e9ecf1;border-radius:4px;"></div>
<span style="left:669.3px;top:423px;line-height:24px;font-size:17.8px;font-weight:400;color:#7d8794;letter-spacing:-0.07px;-webkit-text-stroke:0.3px #7d8794;">Text Filter...</span>
<span style="left:846.8px;top:424px;line-height:24px;font-size:17px;font-weight:700;color:#6b7280;letter-spacing:-0.35px;transform:scaleX(0.8184);transform-origin:0 50%;">Aa</span>
<div style="left:641px;top:463.3px;width:1260.5px;height:1px;background:#e6e9ef;"></div>
<div style="left:641px;top:503.3px;width:1260.5px;height:1px;background:#e6e9ef;"></div>
<div style="left:641px;top:543.3px;width:1260.5px;height:1px;background:#e6e9ef;"></div>
<div style="left:641px;top:583.3px;width:1260.5px;height:1px;background:#e6e9ef;"></div>
<div style="left:641px;top:623.4px;width:1260.5px;height:1px;background:#e6e9ef;"></div>
<svg style="left:654.2px;top:479.3px;" width="16" height="9.5" viewBox="0 0 16 9.500"><path d="M1.200 1.200 8 7.800 14.800 1.200" fill="none" stroke="#8792a2" stroke-width="2"/></svg>
<span style="left:685px;top:471px;line-height:24px;font-size:17.8px;font-weight:400;color:#1e2637;letter-spacing:-0.057px;-webkit-text-stroke:0.2px #1e2637;">test bsct add history</span>
<span style="left:1415px;top:471px;line-height:24px;font-size:17.8px;font-weight:400;color:#1e2637;transform:scaleX(0.8897);transform-origin:0 50%;-webkit-text-stroke:0.2px #1e2637;">0</span>
<span style="left:719.5px;top:511px;line-height:24px;font-size:17.8px;font-weight:400;color:#1e2637;letter-spacing:-0.35px;transform:scaleX(0.9818);transform-origin:0 50%;-webkit-text-stroke:0.2px #1e2637;width:176.31px;overflow:hidden;">Capture d&#x27;écran 2026-02-27</span>
<span style="left:910.5px;top:511px;line-height:24px;font-size:17.8px;font-weight:400;color:#1e2637;letter-spacing:-0.092px;-webkit-text-stroke:0.2px #1e2637;">global-admin</span>
<span style="left:1163px;top:511px;line-height:24px;font-size:17.8px;font-weight:400;color:#1e2637;letter-spacing:0.333px;-webkit-text-stroke:0.2px #1e2637;">27/02/2026</span>
<span style="left:1415px;top:511px;line-height:24px;font-size:17.8px;font-weight:400;color:#1e2637;letter-spacing:0.097px;-webkit-text-stroke:0.2px #1e2637;">117073</span>
<span style="left:1667px;top:511px;line-height:24px;font-size:17.8px;font-weight:400;color:#1e2637;letter-spacing:-0.35px;transform:scaleX(0.9521);transform-origin:0 50%;-webkit-text-stroke:0.2px #1e2637;">f1</span>
<svg style="left:689.3px;top:559.3px;" width="16" height="9.5" viewBox="0 0 16 9.500"><path d="M1.200 1.200 8 7.800 14.800 1.200" fill="none" stroke="#8792a2" stroke-width="2"/></svg>
<span style="left:720px;top:551px;line-height:24px;font-size:17.8px;font-weight:400;color:#1e2637;letter-spacing:-0.013px;-webkit-text-stroke:0.2px #1e2637;">folder0</span>
<span style="left:1163px;top:551px;line-height:24px;font-size:17.8px;font-weight:400;color:#1e2637;letter-spacing:0.333px;-webkit-text-stroke:0.2px #1e2637;">03/03/2026</span>
<span style="left:1415px;top:551px;line-height:24px;font-size:17.8px;font-weight:400;color:#1e2637;transform:scaleX(0.8897);transform-origin:0 50%;-webkit-text-stroke:0.2px #1e2637;">0</span>
<span style="left:755px;top:591px;line-height:24px;font-size:17.8px;font-weight:400;color:#1e2637;letter-spacing:-0.35px;transform:scaleX(0.991);transform-origin:0 50%;-webkit-text-stroke:0.2px #1e2637;width:138.85px;overflow:hidden;">Test_document_manage</span>
<span style="left:1163px;top:591px;line-height:24px;font-size:17.8px;font-weight:400;color:#1e2637;letter-spacing:0.333px;-webkit-text-stroke:0.2px #1e2637;">03/03/2026</span>
<span style="left:1415px;top:591px;line-height:24px;font-size:17.8px;font-weight:400;color:#1e2637;letter-spacing:-0.254px;-webkit-text-stroke:0.2px #1e2637;">8469</span>
<span style="left:1667px;top:591px;line-height:24px;font-size:17.8px;font-weight:400;color:#1e2637;letter-spacing:-0.081px;-webkit-text-stroke:0.2px #1e2637;">file0</span>
<span style="left:719.5px;top:631px;line-height:24px;font-size:17.8px;font-weight:400;color:#1e2637;letter-spacing:-0.35px;transform:scaleX(0.9818);transform-origin:0 50%;-webkit-text-stroke:0.2px #1e2637;width:176.31px;overflow:hidden;">Capture d&#x27;écran 2026-02-27</span>
<span style="left:910.5px;top:631px;line-height:24px;font-size:17.8px;font-weight:400;color:#1e2637;letter-spacing:-0.092px;-webkit-text-stroke:0.2px #1e2637;">global-admin</span>
<span style="left:1163px;top:631px;line-height:24px;font-size:17.8px;font-weight:400;color:#1e2637;letter-spacing:0.333px;-webkit-text-stroke:0.2px #1e2637;">27/02/2026</span>
<span style="left:1415px;top:631px;line-height:24px;font-size:17.8px;font-weight:400;color:#1e2637;letter-spacing:-0.169px;-webkit-text-stroke:0.2px #1e2637;">374463</span>
<span style="left:1667px;top:631px;line-height:24px;font-size:17.8px;font-weight:400;color:#1e2637;letter-spacing:-0.35px;transform:scaleX(0.9464);transform-origin:0 50%;-webkit-text-stroke:0.2px #1e2637;">ACE-612</span>
</div></body></html>
